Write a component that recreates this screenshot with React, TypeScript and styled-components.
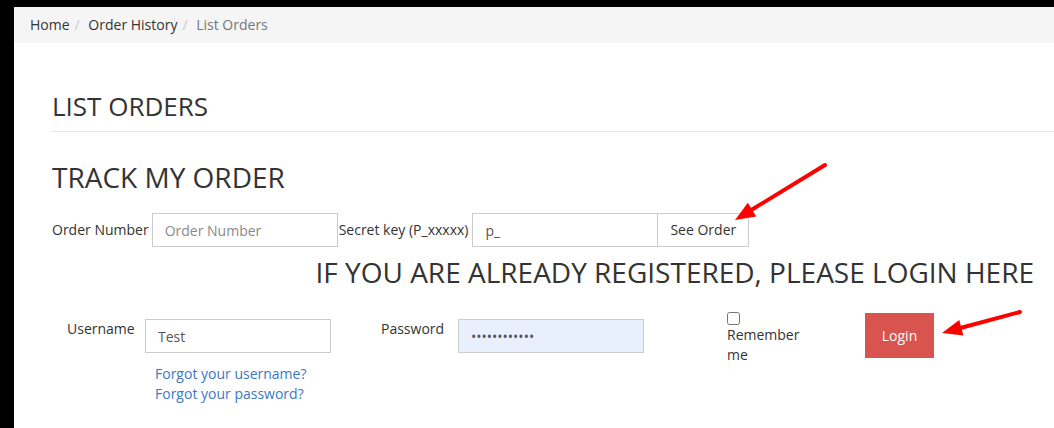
import React from 'react'
import styled, { createGlobalStyle } from 'styled-components'

const GlobalStyle = createGlobalStyle`
  html, body {
    margin: 0;
    padding: 0;
    background: #000;
  }
  body {
    font-family: "Open Sans", "DejaVu Sans", sans-serif;
    font-size: 14px;
    line-height: 20px;
    color: #333;
  }
  * {
    box-sizing: border-box;
  }
`

const Page = styled.div`
  position: relative;
  margin: 7px 0 0 14px;
  background: #fff;
  height: 421px;
  overflow: hidden;
`

const Breadcrumb = styled.ol`
  list-style: none;
  margin: 0;
  padding: 8px 16px;
  height: 36px;
  background: #f5f5f5;
  display: flex;
`

const Crumb = styled.li<{ $active?: boolean }>`
  color: ${(p) => (p.$active ? '#777' : '#333')};
  &:not(:first-child)::before {
    content: '/\\00a0';
    padding: 0 5px;
    color: #ccc;
  }
`

const Content = styled.div`
  padding: 0 0 0 38px;
`

const PageHeader = styled.div`
  margin-top: 48px;
  padding-bottom: 10px;
  border-bottom: 1px solid #e5e5e5;
`

const Title = styled.h1`
  margin: 0;
  font-size: 26px;
  line-height: 30px;
  font-weight: 400;
  text-transform: uppercase;
`

const SubTitle = styled.h2`
  margin: 30px 0 0;
  font-size: 28px;
  line-height: 30px;
  font-weight: 400;
  text-transform: uppercase;
`

const TrackForm = styled.form`
  display: flex;
  align-items: center;
  margin-top: 21px;
`

const Label = styled.label`
  white-space: nowrap;
`

const Input = styled.input<{ $autofill?: boolean }>`
  width: 186px;
  height: 34px;
  padding: 6px 12px;
  border: 1px solid #ccc;
  border-radius: 0;
  font: inherit;
  color: #555;
  background: ${(p) => (p.$autofill ? '#e8f0fe' : '#fff')};
  &::placeholder {
    color: #8a8a8a;
  }
`

const TrackInput = styled(Input)`
  margin: 0 1px 0 3px;
`

const KeyInput = styled(Input)`
  margin-left: 4px;
`

const AddonButton = styled.button`
  height: 34px;
  padding: 6px 12px;
  border: 1px solid #ccc;
  border-left: 0;
  background: #fff;
  font: inherit;
  color: #333;
`

const LoginHeading = styled.h2`
  margin: 7px 20px 0 0;
  text-align: right;
  font-size: 28px;
  line-height: 36px;
  font-weight: 400;
  text-transform: uppercase;
`

const LoginRow = styled.div`
  display: flex;
  align-items: flex-start;
  margin-top: 22px;
`

const Field = styled.div<{ $ml: number }>`
  display: flex;
  align-items: flex-start;
  margin-left: ${(p) => p.$ml}px;
  padding-top: 7px;
`

const FieldLabel = styled.label<{ $w: number }>`
  width: ${(p) => p.$w}px;
`

const Links = styled.div`
  display: flex;
  flex-direction: column;
  padding: 11px 0 0 10px;
`

const Link = styled.a`
  color: #3c78c3;
  text-decoration: none;
`

const Remember = styled.label`
  display: block;
  width: 80px;
  margin-left: 83px;
  input {
    display: block;
    margin: 0;
    width: 13px;
    height: 13px;
  }
`

const LoginButton = styled.button`
  margin: 1px 0 0 58px;
  height: 45px;
  width: 69px;
  border: 0;
  border-radius: 0;
  background: #d9534f;
  color: #fff;
  font: inherit;
`

const Annotations = styled.svg`
  position: absolute;
  left: -14px;
  top: -7px;
  pointer-events: none;
`

const Arrow = ({ x1, y1, x2, y2 }: { x1: number; y1: number; x2: number; y2: number }) => {
  const a = Math.atan2(y2 - y1, x2 - x1)
  const len = 20
  const w = 8
  const bx = x2 - len * Math.cos(a)
  const by = y2 - len * Math.sin(a)
  const px = -Math.sin(a) * w
  const py = Math.cos(a) * w
  return (
    <g fill="#ff0000" stroke="#ff0000">
      <line x1={x1} y1={y1} x2={bx} y2={by} strokeWidth={4} strokeLinecap="round" />
      <polygon points={`${x2},${y2} ${bx + px},${by + py} ${bx - px},${by - py}`} stroke="none" />
    </g>
  )
}

export default function App() {
  return (
    <>
      <GlobalStyle />
      <Page>
        <Breadcrumb>
          <Crumb>Home</Crumb>
          <Crumb>Order History</Crumb>
          <Crumb $active>List Orders</Crumb>
        </Breadcrumb>
        <Content>
          <PageHeader>
            <Title>List Orders</Title>
          </PageHeader>
          <SubTitle>Track my order</SubTitle>
          <TrackForm>
            <Label>Order Number</Label>
            <TrackInput placeholder="Order Number" />
            <Label>Secret key (P_xxxxx)</Label>
            <KeyInput defaultValue="p_" />
            <AddonButton type="button">See Order</AddonButton>
          </TrackForm>
          <LoginHeading>If you are already registered, please login here</LoginHeading>
          <LoginRow>
            <Field $ml={15}>
              <FieldLabel $w={78}>Username</FieldLabel>
              <div>
                <Input defaultValue="Test" />
                <Links>
                  <Link href="#">Forgot your username?</Link>
                  <Link href="#">Forgot your password?</Link>
                </Links>
              </div>
            </Field>
            <Field $ml={50}>
              <FieldLabel $w={77}>Password</FieldLabel>
              <Input type="password" defaultValue="123456789012" $autofill />
            </Field>
            <Remember>
              <input type="checkbox" />
              Remember me
            </Remember>
            <LoginButton type="button">Login</LoginButton>
          </LoginRow>
        </Content>
        <Annotations width="1054" height="428">
          <Arrow x1={825} y1={165} x2={735} y2={220} />
          <Arrow x1={1020} y1={312} x2={942} y2={333} />
        </Annotations>
      </Page>
    </>
  )
}
